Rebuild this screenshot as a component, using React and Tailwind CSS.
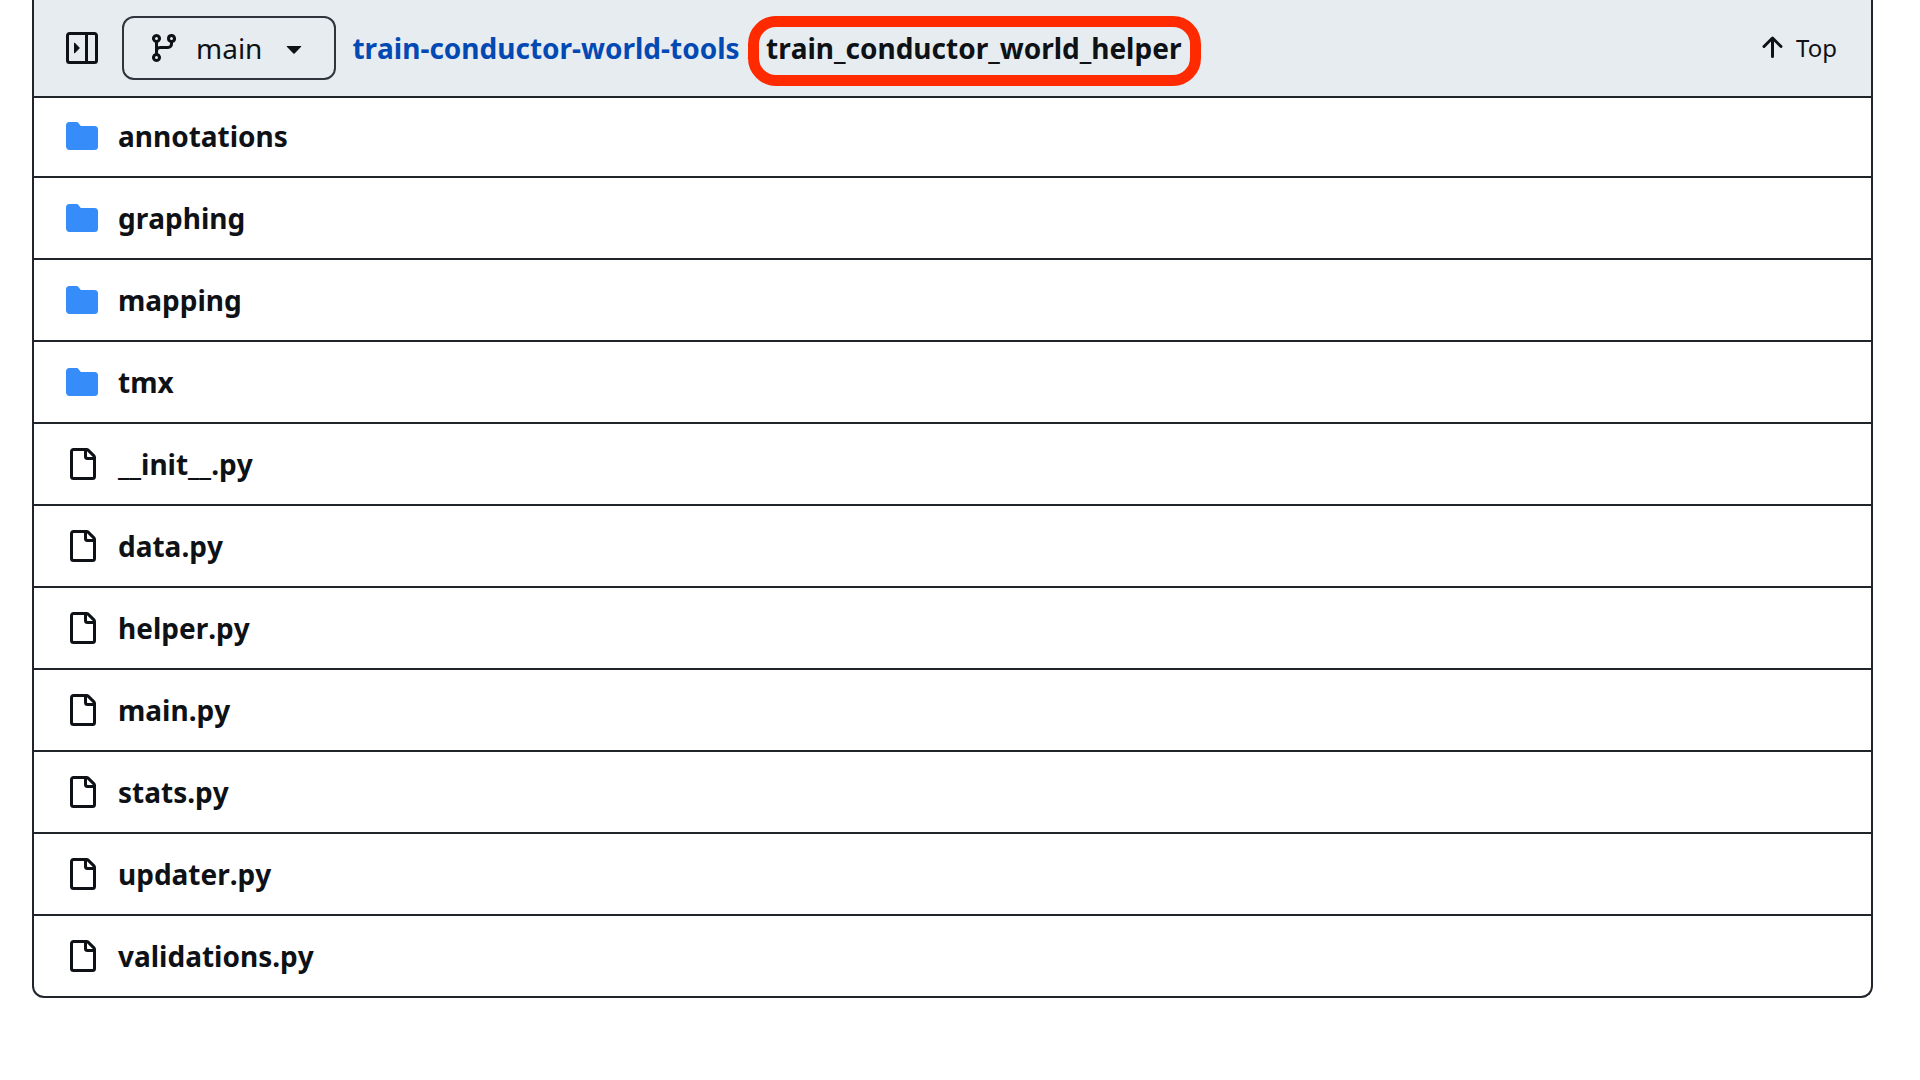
const PATHS = {
  sidebar:
    'M6.823 7.823a.25.25 0 0 1 0 .354l-2.396 2.396A.25.25 0 0 1 4 10.396V5.604a.25.25 0 0 1 .427-.177Z M1.75 0h12.5C15.216 0 16 .784 16 1.75v12.5A1.75 1.75 0 0 1 14.25 16H1.75A1.75 1.75 0 0 1 0 14.25V1.75C0 .784.784 0 1.75 0ZM1.5 1.75v12.5c0 .138.112.25.25.25H9.5v-13H1.75a.25.25 0 0 0-.25.25ZM11 14.5h3.25a.25.25 0 0 0 .25-.25V1.75a.25.25 0 0 0-.25-.25H11Z',
  branch:
    'M9.5 3.25a2.25 2.25 0 1 1 3 2.122V6A2.5 2.5 0 0 1 10 8.5H6a1 1 0 0 0-1 1v1.128a2.251 2.251 0 1 1-1.5 0V5.372a2.25 2.25 0 1 1 1.5 0v1.836A2.493 2.493 0 0 1 6 7h4a1 1 0 0 0 1-1v-.628A2.25 2.25 0 0 1 9.5 3.25Zm-6 0a.75.75 0 1 0 1.5 0 .75.75 0 0 0-1.5 0Zm8.25-.75a.75.75 0 1 0 0 1.5.75.75 0 0 0 0-1.5ZM4.25 12a.75.75 0 1 0 0 1.5.75.75 0 0 0 0-1.5Z',
  caret:
    'm4.427 7.427 3.396 3.396a.25.25 0 0 0 .354 0l3.396-3.396A.25.25 0 0 0 11.396 7H4.604a.25.25 0 0 0-.177.427Z',
  arrowUp:
    'M3.47 7.78a.75.75 0 0 1 0-1.06l4.25-4.25a.75.75 0 0 1 1.06 0l4.25 4.25a.751.751 0 0 1-.018 1.042.751.751 0 0 1-1.042.018L9 4.81v7.44a.75.75 0 0 1-1.5 0V4.81L4.53 7.78a.75.75 0 0 1-1.06 0Z',
  folder:
    'M1.75 1A1.75 1.75 0 0 0 0 2.75v10.5C0 14.216.784 15 1.75 15h12.5A1.75 1.75 0 0 0 16 13.25v-8.5A1.75 1.75 0 0 0 14.25 3H7.5a.25.25 0 0 1-.2-.1l-.9-1.2C6.07 1.26 5.55 1 5 1H1.75Z',
  file:
    'M2 1.75C2 .784 2.784 0 3.75 0h6.586c.464 0 .909.184 1.237.513l2.914 2.914c.329.328.513.773.513 1.237v9.586A1.75 1.75 0 0 1 13.25 16h-9.5A1.75 1.75 0 0 1 2 14.25Zm1.75-.25a.25.25 0 0 0-.25.25v12.5c0 .138.112.25.25.25h9.5a.25.25 0 0 0 .25-.25V6h-2.75A1.75 1.75 0 0 1 9 4.25V1.5Zm6.75.062V4.25c0 .138.112.25.25.25h2.688l-.011-.013-2.914-2.914-.013-.011Z',
};

function Icon({ name, className = '' }) {
  return (
    <svg viewBox="0 0 16 16" fill="currentColor" aria-hidden="true" className={`size-8 shrink-0 ${className}`}>
      <path d={PATHS[name]} />
    </svg>
  );
}

const ENTRIES = [
  ['folder', 'annotations'],
  ['folder', 'graphing'],
  ['folder', 'mapping'],
  ['folder', 'tmx'],
  ['file', '__init__.py'],
  ['file', 'data.py'],
  ['file', 'helper.py'],
  ['file', 'main.py'],
  ['file', 'stats.py'],
  ['file', 'updater.py'],
  ['file', 'validations.py'],
];

export default function App() {
  return (
    <main className="min-h-screen bg-white pr-[47px] pl-8 font-['Noto_Sans',sans-serif] text-[28px] leading-10 text-[#0e1116]">
      <div className="overflow-hidden rounded-b-xl border-2 border-t-0 border-[#20252c]">
        <header className="flex h-[98px] items-center border-b-2 border-[#20252c] bg-[#e7ecf0] pr-[34px] pl-8">
          <button type="button" aria-label="Expand file tree">
            <Icon name="sidebar" />
          </button>
          <button
            type="button"
            className="ml-6 flex h-16 items-center gap-4 rounded-xl border-2 border-[#2f353c] px-6"
          >
            <Icon name="branch" />
            <span>main</span>
            <Icon name="caret" />
          </button>
          <nav
            aria-label="Breadcrumb"
            className="ml-4 flex flex-1 items-center gap-2 font-bold [font-kerning:none]"
          >
            <a href="#tools" className="text-[#0349b4]">
              train-conductor-world-tools
            </a>
            <span className="font-normal">/</span>
            <span className="relative">
              train_conductor_world_helper
              <span className="absolute -top-3 -right-5 -bottom-[18px] -left-[18px] rounded-[28px] border-[11px] border-[#ff2a00]" />
            </span>
            <span className="font-normal">/</span>
          </nav>
          <a href="#top" className="flex items-center gap-2 text-2xl">
            <Icon name="arrowUp" />
            Top
          </a>
        </header>
        <ul>
          {ENTRIES.map(([icon, name]) => (
            <li
              key={name}
              className="flex h-[82px] items-center gap-5 border-t-2 border-[#20252c] px-8 first:h-[78px] first:border-t-0 first:pb-0.5"
            >
              <Icon name={icon} className={icon === 'folder' ? 'text-[#368cf9]' : ''} />
              <a href={`#${name}`} className="font-bold [font-kerning:none]">
                {name}
              </a>
            </li>
          ))}
        </ul>
      </div>
    </main>
  );
}
